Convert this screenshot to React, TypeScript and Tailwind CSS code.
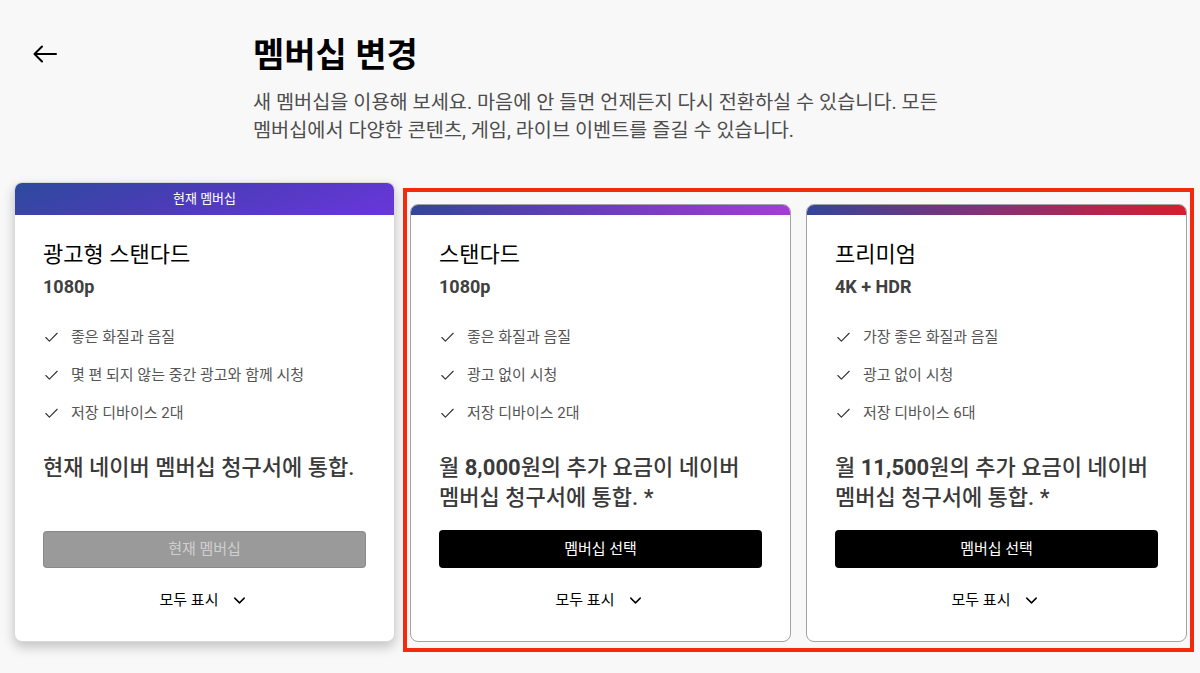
import { ChevronDown, Check } from 'lucide-react';

type Plan = {
  name: string;
  quality: string;
  features: string[];
  price: React.ReactNode;
  current?: boolean;
  stripe: string;
};

const plans: Plan[] = [
  {
    name: '광고형 스탠다드',
    quality: '1080p',
    features: ['좋은 화질과 음질', '몇 편 되지 않는 중간 광고와 함께 시청', '저장 디바이스 2대'],
    price: <>현재 네이버 멤버십 청구서에 통합.</>,
    current: true,
    stripe: 'bg-[linear-gradient(160deg,#2c4a9c_0%,#4b3cb8_45%,#6a36dc_100%)]',
  },
  {
    name: '스탠다드',
    quality: '1080p',
    features: ['좋은 화질과 음질', '광고 없이 시청', '저장 디바이스 2대'],
    price: (
      <>
        월 <span className="font-bold">8,000</span>원의 추가 요금이 네이버
        <br />
        멤버십 청구서에 통합. *
      </>
    ),
    stripe: 'bg-[linear-gradient(to_right,#33459c,#6b3cc0_50%,#a63bd8)]',
  },
  {
    name: '프리미엄',
    quality: '4K + HDR',
    features: ['가장 좋은 화질과 음질', '광고 없이 시청', '저장 디바이스 6대'],
    price: (
      <>
        월 <span className="font-bold">11,500</span>원의 추가 요금이 네이버
        <br />
        멤버십 청구서에 통합. *
      </>
    ),
    stripe: 'bg-[linear-gradient(to_right,#33459c,#8a2f74_50%,#d31f2c)]',
  },
];

function PlanBody({ plan }: { plan: Plan }) {
  return (
    <div className="flex flex-col px-[28px] pt-[26px] pb-[31px] h-full">
      <h2 className="text-[22px] leading-[28px] text-black">{plan.name}</h2>
      <p className="mt-[6px] text-[18px] leading-[24px] font-bold text-[#404040]">{plan.quality}</p>
      <ul className="mt-[28px] flex flex-col gap-[18px]">
        {plan.features.map((f) => (
          <li key={f} className="flex items-center gap-[11px] text-[15px] leading-[20px] text-[#555]">
            <Check className="w-[17px] h-[17px] text-[#333] flex-shrink-0" strokeWidth={1.6} />
            <span>{f}</span>
          </li>
        ))}
      </ul>
      <p className="mt-[30px] text-[22px] leading-[30px] font-medium text-[#3a3a3a] whitespace-nowrap">{plan.price}</p>
      {plan.current ? (
        <button className="mt-auto h-[37px] w-full rounded-[4px] bg-[#9a9a9a] border border-black/10 text-[15px] text-[#cfcfcf]">
          현재 멤버십
        </button>
      ) : (
        <button className="mt-auto h-[38px] w-full rounded-[4px] bg-black text-[15px] text-white">멤버십 선택</button>
      )}
      <button className="mt-[22px] flex items-center justify-center gap-[12px] text-[15px] leading-[20px] text-black">
        모두 표시
        <ChevronDown className="w-[19px] h-[19px]" strokeWidth={1.8} />
      </button>
    </div>
  );
}

export default function App() {
  return (
    <div
      className="min-h-screen bg-[#f8f8f8] pb-10"
      style={{ fontFamily: 'Roboto, "Noto Sans CJK KR", sans-serif' }}
    >
      <header className="flex pt-[35px]">
        <div className="w-[253px] pl-[33px] pt-[10px] flex-shrink-0">
          <svg width="24" height="18" viewBox="0 0 24 18" fill="none" stroke="black" strokeWidth="2" strokeLinecap="round" strokeLinejoin="round">
            <path d="M23 9H1.5M9 1.5 1.5 9 9 16.5" />
          </svg>
        </div>
        <div>
          <h1 className="text-[34px] leading-[40px] font-bold text-black">멤버십 변경</h1>
          <p className="mt-[14px] max-w-[720px] break-keep text-[19.7px] leading-[28px] text-[#4d4d4d]">
            새 멤버십을 이용해 보세요. 마음에 안 들면 언제든지 다시 전환하실 수 있습니다. 모든 멤버십에서 다양한 콘텐츠, 게임, 라이브 이벤트를 즐길 수 있습니다.
          </p>
        </div>
      </header>

      <main className="relative mt-[37px] pl-[14px] flex items-end gap-[15px]">
        {/* 현재 멤버십 */}
        <div className="w-[381px] bg-white rounded-lg overflow-hidden border border-black/15 shadow-[0_5px_12px_rgba(0,0,0,0.22)]">
          <div className={`h-[32px] flex items-center justify-center text-[13px] text-white ${plans[0].stripe}`}>
            현재 멤버십
          </div>
          <div className="h-[426px]">
            <PlanBody plan={plans[0]} />
          </div>
        </div>

        {plans.slice(1).map((p) => (
          <div key={p.name} className="w-[381px] bg-white rounded-lg overflow-hidden border border-[#a3a3a3]">
            <div className={`h-[10px] ${p.stripe}`} />
            <div className="h-[426px]">
              <PlanBody plan={p} />
            </div>
          </div>
        ))}

        {/* highlight */}
        <div className="absolute left-[403px] top-[6px] w-[791px] h-[464px] border-[4px] border-[#f42a0c] pointer-events-none" />
      </main>
    </div>
  );
}
